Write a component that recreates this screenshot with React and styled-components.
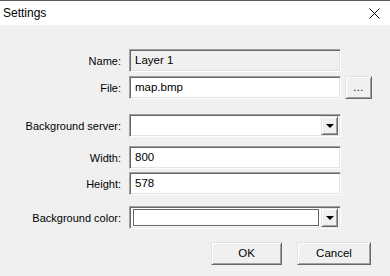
import React from 'react';
import styled, { createGlobalStyle } from 'styled-components';

const GlobalStyle = createGlobalStyle`
  html, body {
    margin: 0;
    padding: 0;
    background: #f0f0f0;
  }
  body {
    font-family: "Liberation Sans", Arial, sans-serif;
    font-size: 11px;
    color: #000;
  }
`;

const Window = styled.div`
  width: 390px;
  height: 276px;
  background: #f0f0f0;
  display: flex;
  flex-direction: column;
  overflow: hidden;
`;

const TitleBar = styled.div`
  height: 24px;
  background: #fff;
  border-top: 1px solid #5a5a5a;
  display: flex;
  align-items: center;
  justify-content: space-between;
  padding-left: 3px;
  padding-right: 9px;
  font-size: 12px;
`;

const CloseIcon = styled.svg`
  width: 11px;
  height: 11px;
  margin-right: 1px;
`;

const Body = styled.div`
  padding-top: 24px;
  padding-right: 18px;
  display: flex;
  flex-direction: column;
`;

const Row = styled.div`
  display: flex;
  align-items: center;
  height: 23px;
  margin-top: ${(p) => p.gap || 0}px;
`;

const Label = styled.div`
  width: 121px;
  text-align: right;
  padding-right: 8px;
  box-sizing: content-box;
  white-space: nowrap;
`;

const Sunken = styled.div`
  box-sizing: border-box;
  width: 212px;
  height: 23px;
  background: ${(p) => (p.disabled ? '#f0f0f0' : '#fff')};
  border-top: 1px solid #a0a0a0;
  border-left: 1px solid #a0a0a0;
  border-right: 1px solid #fff;
  border-bottom: 1px solid #fff;
  box-shadow: inset 1px 1px 0 #696969, inset -1px -1px 0 #e3e3e3;
  display: flex;
  align-items: center;
  padding-left: 5px;
  padding-right: 2px;
  font-size: 11.5px;
`;

const Value = styled.span`
  flex: 1;
  margin-top: -1px;
`;

const Raised = styled.div`
  box-sizing: border-box;
  background: #f0f0f0;
  border-top: 1px solid #e3e3e3;
  border-left: 1px solid #e3e3e3;
  border-right: 1px solid #696969;
  border-bottom: 1px solid #696969;
  box-shadow: inset 1px 1px 0 #fff, inset -1px -1px 0 #a0a0a0;
  display: flex;
  align-items: center;
  justify-content: center;
`;

const BrowseButton = styled(Raised)`
  width: 27px;
  height: 23px;
  margin-left: 4px;
  font-size: 11px;
  letter-spacing: 0.5px;
  padding-bottom: 2px;
`;

const DropButton = styled(Raised)`
  width: 17px;
  height: 19px;
  margin-left: auto;
`;

const Arrow = styled.span`
  width: 0;
  height: 0;
  border-left: 4px solid transparent;
  border-right: 4px solid transparent;
  border-top: 4px solid #000;
`;

const ColorSwatch = styled.div`
  box-sizing: border-box;
  flex: 1;
  height: 17px;
  margin-left: -2px;
  margin-right: 2px;
  background: #fff;
  border: 1px solid #646464;
`;

const ButtonRow = styled.div`
  display: flex;
  justify-content: flex-end;
  gap: 15px;
  margin-top: 13px;
  padding-right: 1px;
`;

const DialogButton = styled(Raised)`
  width: ${(p) => p.w}px;
  height: 23px;
  font-size: 11.5px;
  padding-bottom: 1px;
`;

const fields = [
  { label: 'Name:', value: 'Layer 1', disabled: true, gap: 0 },
  { label: 'File:', value: 'map.bmp', browse: true, gap: 4 },
  { label: 'Background server:', value: '', combo: true, gap: 15 },
  { label: 'Width:', value: '800', gap: 9 },
  { label: 'Height:', value: '578', gap: 3 },
];

export default function App() {
  return (
    <>
      <GlobalStyle />
      <Window>
        <TitleBar>
          <span>Settings</span>
          <CloseIcon viewBox="0 0 11 11">
            <path d="M0.5 0.5 L10.5 10.5 M10.5 0.5 L0.5 10.5" stroke="#000" strokeWidth="1" fill="none" />
          </CloseIcon>
        </TitleBar>
        <Body>
          {fields.map((f) => (
            <Row key={f.label} gap={f.gap}>
              <Label>{f.label}</Label>
              <Sunken disabled={f.disabled}>
                <Value>{f.value}</Value>
                {f.combo && (
                  <DropButton>
                    <Arrow />
                  </DropButton>
                )}
              </Sunken>
              {f.browse && <BrowseButton>...</BrowseButton>}
            </Row>
          ))}
          <Row gap={11}>
            <Label>Background color:</Label>
            <Sunken>
              <ColorSwatch />
              <DropButton>
                <Arrow />
              </DropButton>
            </Sunken>
          </Row>
          <ButtonRow>
            <DialogButton w={71}>OK</DialogButton>
            <DialogButton w={74}>Cancel</DialogButton>
          </ButtonRow>
        </Body>
      </Window>
    </>
  );
}
